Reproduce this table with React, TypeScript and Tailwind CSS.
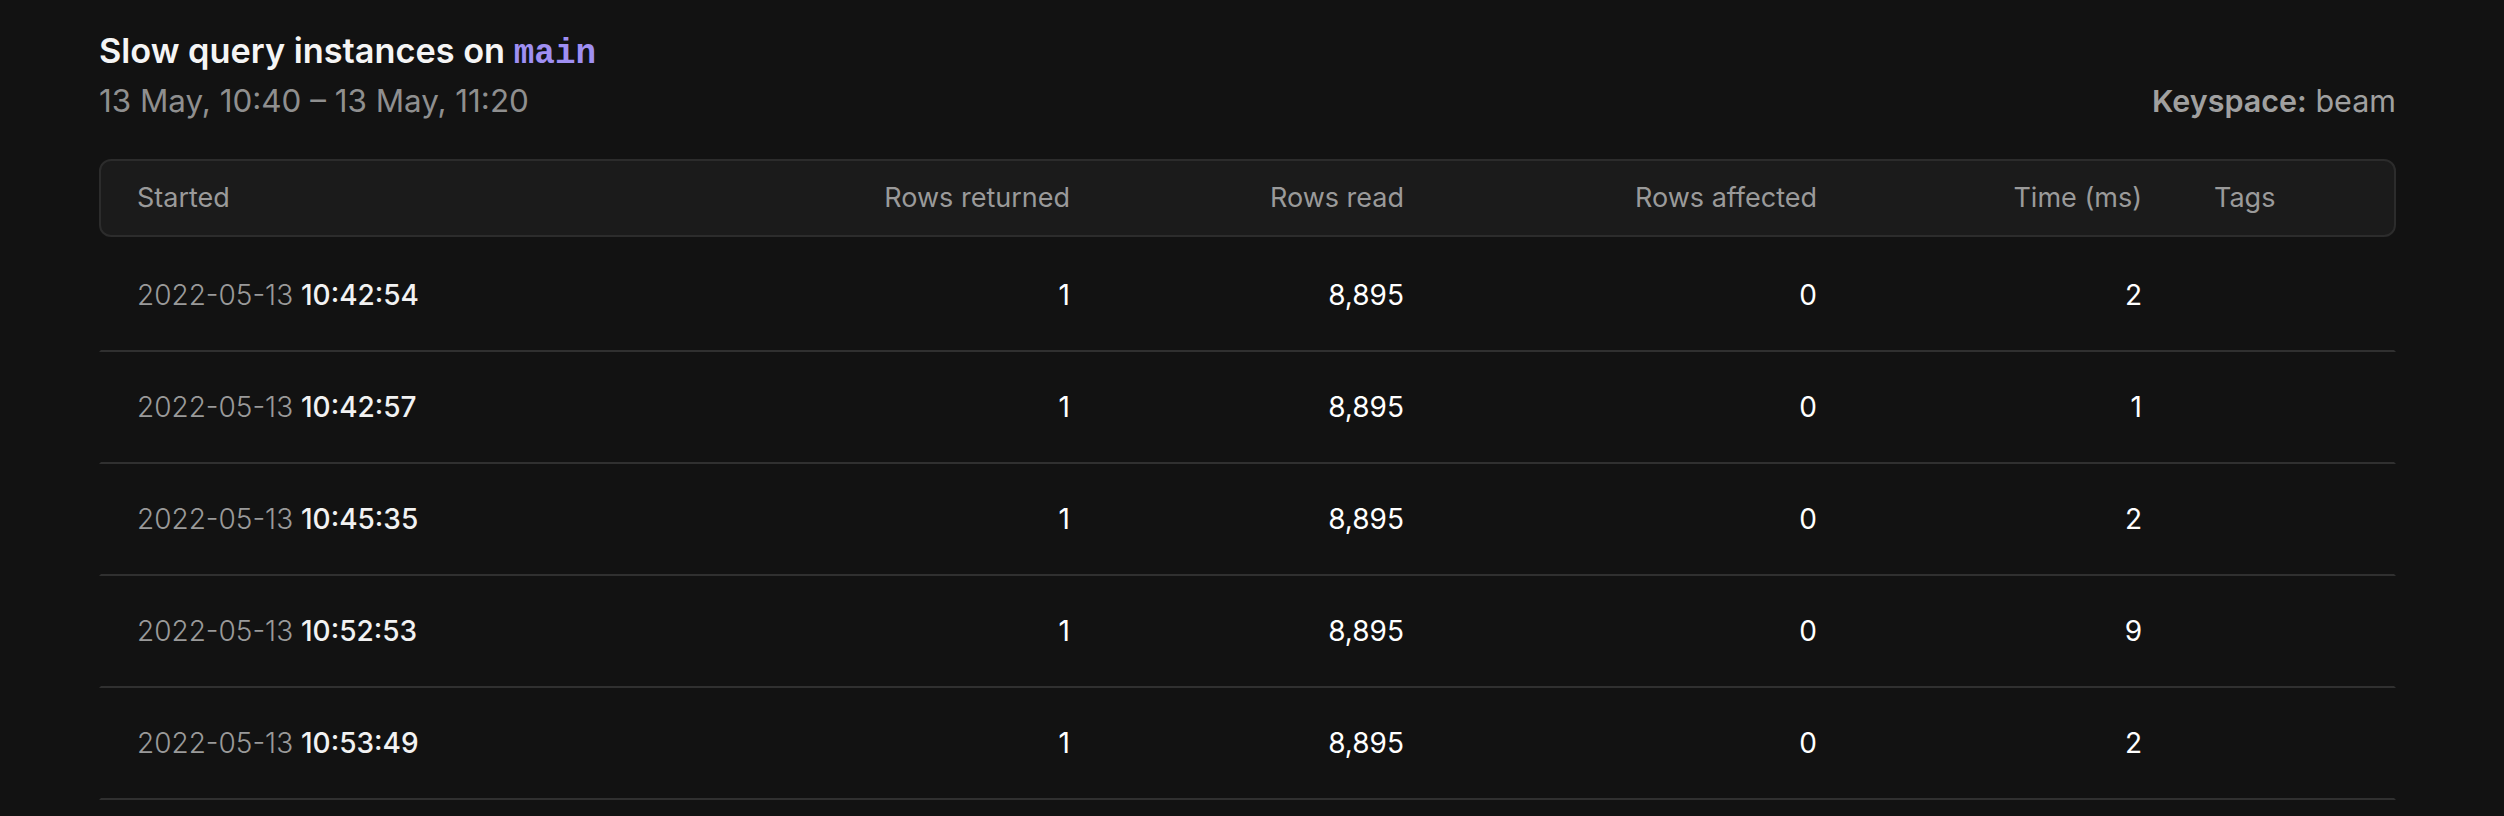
import React from 'react';

interface SlowQueryRow {
  date: string;
  time: string;
  rowsReturned: number;
  rowsRead: number;
  rowsAffected: number;
  timeMs: number;
}

const rows: SlowQueryRow[] = [
  { date: '2022-05-13', time: '10:42:54', rowsReturned: 1, rowsRead: 8895, rowsAffected: 0, timeMs: 2 },
  { date: '2022-05-13', time: '10:42:57', rowsReturned: 1, rowsRead: 8895, rowsAffected: 0, timeMs: 1 },
  { date: '2022-05-13', time: '10:45:35', rowsReturned: 1, rowsRead: 8895, rowsAffected: 0, timeMs: 2 },
  { date: '2022-05-13', time: '10:52:53', rowsReturned: 1, rowsRead: 8895, rowsAffected: 0, timeMs: 9 },
  { date: '2022-05-13', time: '10:53:49', rowsReturned: 1, rowsRead: 8895, rowsAffected: 0, timeMs: 2 },
];

// Shared column template so header and rows line up
const cols = 'grid grid-cols-[600px_405px_334px_413px_325px_1fr] items-center';

function App() {
  return (
    <div
      className="min-h-screen bg-[#121212] pl-[99px] pr-[108px] pt-[27px] text-[28px] text-white"
      style={{ fontFamily: 'Inter, "Noto Sans", sans-serif' }}
    >
      <h1 className="text-[34.3px] font-semibold leading-[48px] text-[#f5f5f5]">
        Slow query instances on{' '}
        <span className="font-['Liberation_Mono','DejaVu_Sans_Mono',monospace] font-bold text-[#9f8ff2]">main</span>
      </h1>
      <div className="mt-[3px] flex items-center justify-between text-[31.4px] leading-[40px] text-[#8f8f8f]">
        <span>13 May, 10:40 – 13 May, 11:20</span>
        <span className="text-[30.5px] text-[#a0a0a0]">
          <span className="font-semibold">Keyspace:</span> beam
        </span>
      </div>

      <div className="mt-[38px]">
        {/* Header */}
        <div className={`${cols} h-[78px] rounded-[12px] border-2 border-[#2c2c2c] bg-[#1b1b1b] text-[27px] text-[#9a9a9a]`}>
          <div className="px-[36px]">Started</div>
          <div className="px-[36px] text-right">Rows returned</div>
          <div className="px-[36px] text-right">Rows read</div>
          <div className="px-[36px] text-right">Rows affected</div>
          <div className="px-[36px] text-right">Time (ms)</div>
          <div className="px-[36px]">Tags</div>
        </div>

        <div className="pt-[3px]">
          {rows.map((row) => (
            <div
              key={row.time}
              className={`${cols} h-[112px] border-x-2 border-b-2 border-x-transparent border-b-[#303030]`}
            >
              <div className="px-[36px]">
                <span className="font-light text-[#9a9a9a]">{row.date}</span>{' '}
                <span className="font-medium text-[#f2f2f2]">{row.time}</span>
              </div>
              <div className="px-[36px] text-right">{row.rowsReturned}</div>
              <div className="px-[36px] text-right">{row.rowsRead.toLocaleString('en-US')}</div>
              <div className="px-[36px] text-right">{row.rowsAffected}</div>
              <div className="px-[36px] text-right">{row.timeMs}</div>
              <div className="px-[36px]" />
            </div>
          ))}
        </div>
      </div>
    </div>
  );
}

export default App;
